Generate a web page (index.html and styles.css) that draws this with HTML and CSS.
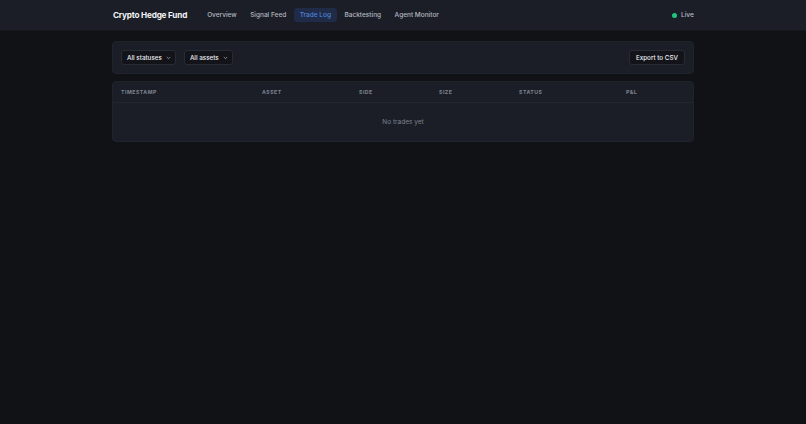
FILE: index.html
```html
<!DOCTYPE html>
<html>
<head>
<meta charset="utf-8">
<link rel="stylesheet" href="styles.css">
</head>
<body>
<header class="topbar">
  <div class="topbar-inner">
    <div class="brand">Crypto Hedge Fund</div>
    <nav class="nav">
      <a class="nav-item">Overview</a>
      <a class="nav-item">Signal Feed</a>
      <a class="nav-item active">Trade Log</a>
      <a class="nav-item">Backtesting</a>
      <a class="nav-item">Agent Monitor</a>
    </nav>
    <div class="live"><span class="dot"></span>Live</div>
  </div>
</header>
<main class="container">
  <section class="card filters">
    <div class="filter-group">
      <div class="select">All statuses <svg width="5" height="4" viewBox="0 0 5 4"><path d="M0.8 1l1.7 1.7L4.2 1" fill="none" stroke="#9ca3af" stroke-width="0.8"/></svg></div>
      <div class="select">All assets <svg width="5" height="4" viewBox="0 0 5 4"><path d="M0.8 1l1.7 1.7L4.2 1" fill="none" stroke="#9ca3af" stroke-width="0.8"/></svg></div>
    </div>
    <button class="btn">Export to CSV</button>
  </section>
  <section class="card table-card">
    <table class="trades">
      <thead>
        <tr>
          <th class="c1">Timestamp</th>
          <th class="c2">Asset</th>
          <th class="c3">Side</th>
          <th class="c4">Size</th>
          <th class="c5">Status</th>
          <th class="c6">P&amp;L</th>
        </tr>
      </thead>
      <tbody>
        <tr><td colspan="6" class="empty">No trades yet</td></tr>
      </tbody>
    </table>
  </section>
</main>
</body>
</html>
```
FILE: styles.css
```css
* { box-sizing: border-box; }
html, body { margin: 0; padding: 0; }
body {
  background: #111216;
  font-family: Inter, "Liberation Sans", sans-serif;
  color: #e5e7eb;
  width: 806px;
  height: 424px;
  overflow: hidden;
}
.topbar {
  background: #1b1e26;
  height: 31px;
  border-bottom: 1px solid #16181e;
}
.topbar-inner {
  width: 582px;
  margin: 0 auto;
  height: 30px;
  display: flex;
  align-items: center;
}
.brand {
  font-size: 8.2px;
  font-weight: 700;
  color: #f3f4f6;
  letter-spacing: -0.2px;
  margin-left: 1px;
  margin-right: 14px;
}
.nav { display: flex; gap: 1.5px; flex: 1; }
.nav-item {
  font-size: 6.5px;
  font-weight: 500;
  color: #b3b8c1;
  padding: 0 6px;
  height: 14px;
  line-height: 15px;
  border-radius: 3px;
}
.nav-item.active {
  background: #1f2b47;
  color: #4f83d9;
}
.live {
  display: flex;
  align-items: center;
  font-size: 6.7px;
  font-weight: 500;
  color: #b3b8c1;
  gap: 4px;
}
.dot {
  width: 5px; height: 5px; border-radius: 50%;
  background: #1ec77f;
}
.container {
  width: 582px;
  margin: 10px auto 0;
  display: flex;
  flex-direction: column;
  gap: 7px;
}
.card {
  background: #1b1e26;
  border-radius: 4px;
  border: 1px solid #1f232c;
}
.filters {
  height: 33px;
  display: flex;
  align-items: center;
  justify-content: space-between;
  padding: 0 8px;
}
.filter-group { display: flex; gap: 8px; }
.select, .btn {
  height: 15px;
  background: #121419;
  border: 1px solid #272b35;
  border-radius: 3px;
  color: #eceef2;
  font-size: 6.3px;
  font-weight: 500;
  font-family: inherit;
  display: flex;
  align-items: center;
  padding: 0 4px 0 5px;
  gap: 4px;
}
.btn { padding: 0 6px; }
.table-card { height: 61px; overflow: hidden; }
.trades {
  width: 100%;
  border-collapse: collapse;
  table-layout: fixed;
}
.trades th {
  text-align: left;
  font-size: 5.2px;
  font-weight: 700;
  letter-spacing: 0.5px;
  text-transform: uppercase;
  color: #7d838f;
  height: 20px;
  padding: 0 0 0 8px;
  border-bottom: 1px solid #22262f;
}
.c1 { width: 141px; }
.c2 { width: 97px; }
.c3 { width: 80px; }
.c4 { width: 80px; }
.c5 { width: 107px; }
.empty {
  text-align: center;
  font-size: 6.5px;
  color: #7d838f;
  height: 40px;
}
```
